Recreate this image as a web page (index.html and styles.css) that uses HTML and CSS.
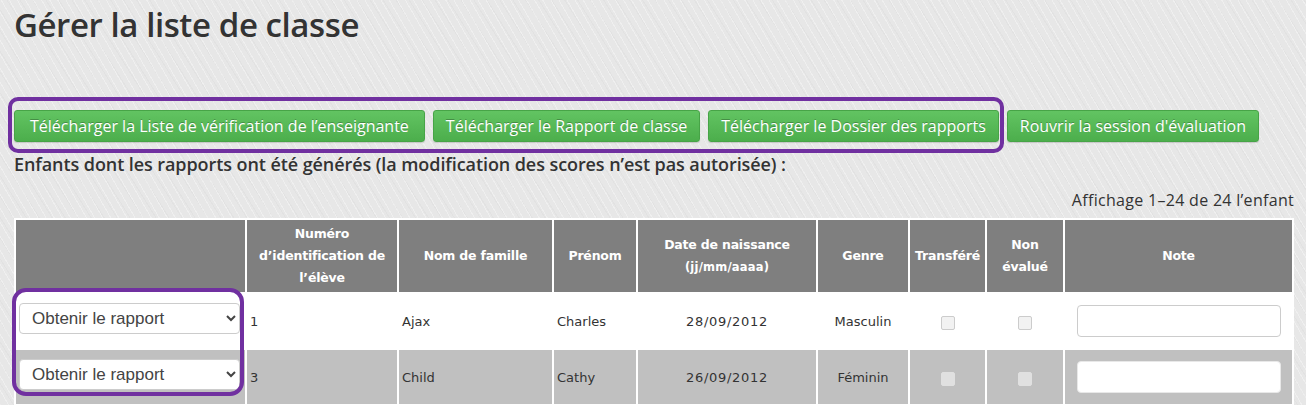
FILE: index.html
```html
<!DOCTYPE html>
<html lang="fr">
<head>
    <meta charset="UTF-8">
    <title>Gérer la liste de classe</title>
    <link rel="stylesheet" href="styles.css">
</head>
<body>
    <h1 class="page-title">Gérer la liste de classe</h1>

    <!-- Actions -->
    <div class="actions">
        <button class="btn-green btn-wide">Télécharger la Liste de vérification de l’enseignante</button>
        <button class="btn-green">Télécharger le Rapport de classe</button>
        <button class="btn-green">Télécharger le Dossier des rapports</button>
        <button class="btn-green">Rouvrir la session d'évaluation</button>
        <div class="highlight highlight-buttons"></div>
    </div>

    <h2 class="section-title">Enfants dont les rapports ont été générés (la modification des scores n’est pas autorisée) :</h2>
    <p class="paging">Affichage 1–24 de 24 l’enfant</p>

    <!-- Class list -->
    <div class="table-wrap">
        <table class="class-list">
            <colgroup>
                <col style="width:231px">
                <col style="width:152px">
                <col style="width:155px">
                <col style="width:84px">
                <col style="width:180px">
                <col style="width:92px">
                <col style="width:77px">
                <col style="width:78px">
                <col>
            </colgroup>
            <thead>
                <tr>
                    <th></th>
                    <th>Numéro d’identification de l’élève</th>
                    <th>Nom de famille</th>
                    <th>Prénom</th>
                    <th>Date de naissance<br><span class="hint">(jj/mm/aaaa)</span></th>
                    <th>Genre</th>
                    <th>Transféré</th>
                    <th>Non évalué</th>
                    <th>Note</th>
                </tr>
            </thead>
            <tbody>
                <tr>
                    <td><select class="report-select"><option>Obtenir le rapport</option></select></td>
                    <td>1</td>
                    <td>Ajax</td>
                    <td>Charles</td>
                    <td class="center date">28/09/2012</td>
                    <td class="center">Masculin</td>
                    <td class="center"><span class="check"></span></td>
                    <td class="center"><span class="check"></span></td>
                    <td><input type="text" class="note-input"></td>
                </tr>
                <tr class="alt">
                    <td><select class="report-select"><option>Obtenir le rapport</option></select></td>
                    <td>3</td>
                    <td>Child</td>
                    <td>Cathy</td>
                    <td class="center date">26/09/2012</td>
                    <td class="center">Féminin</td>
                    <td class="center"><span class="check"></span></td>
                    <td class="center"><span class="check"></span></td>
                    <td><input type="text" class="note-input"></td>
                </tr>
            </tbody>
        </table>
        <div class="highlight highlight-selects"></div>
    </div>
</body>
</html>
```

FILE: styles.css
```css
body {
    margin: 0;
    padding: 0 12px 0 14px;
    font-family: "Open Sans", Arial, sans-serif;
    color: #333;
    background-color: #e7e7e7;
    background-image:
        repeating-linear-gradient(60deg, rgba(255, 255, 255, 0.35) 0px, rgba(255, 255, 255, 0.35) 1px, transparent 1px, transparent 7px),
        repeating-linear-gradient(58deg, rgba(0, 0, 0, 0.025) 0px, rgba(0, 0, 0, 0.025) 1px, transparent 1px, transparent 11px);
    height: 405px;
    overflow: hidden;
}

.page-title {
    margin: 0;
    padding-top: 2px;
    font-size: 33px;
    font-weight: 600;
    letter-spacing: -0.42px;
    line-height: 46px;
    color: #333;
}

.actions {
    position: relative;
    display: flex;
    gap: 8px;
    margin-top: 62px;
}

.btn-green {
    font-family: "Open Sans", Arial, sans-serif;
    font-size: 16px;
    color: #fff;
    text-shadow: 0 -1px 0 rgba(0, 0, 0, 0.25);
    background: linear-gradient(#62c462, #4cae4c);
    border: 1px solid #47a447;
    border-radius: 3px;
    height: 32px;
    padding: 0 12px;
    cursor: pointer;
    box-shadow: 0 1px 1px rgba(0, 0, 0, 0.15);
}

.btn-wide {
    padding: 0 15px 0 15px;
}

.highlight {
    position: absolute;
    border: 4px solid #7030a0;
    pointer-events: none;
}

.highlight-buttons {
    left: -6px;
    top: -13px;
    width: 988px;
    height: 48px;
    border-radius: 10px;
}

.section-title {
    margin: 9px 0 0;
    font-size: 18px;
    font-weight: 600;
    letter-spacing: -0.08px;
    line-height: 26px;
    color: #333;
}

.paging {
    margin: 12px 0 0;
    text-align: right;
    font-size: 16px;
    letter-spacing: 0.3px;
    line-height: 22px;
    color: #333;
}

.table-wrap {
    position: relative;
    margin-top: 7px;
}

.class-list {
    width: 1280px;
    table-layout: fixed;
    border-collapse: collapse;
    font-family: "DejaVu Sans", Verdana, sans-serif;
    font-size: 13px;
    color: #333;
}

.class-list th,
.class-list td {
    border: 2px solid #fff;
}

.class-list th {
    background-color: #7f7f7f;
    color: #fff;
    font-size: 12.5px;
    font-weight: bold;
    line-height: 22px;
    height: 72px;
    padding: 0 4px;
    text-align: center;
    letter-spacing: -0.2px;
}

.hint {
    font-size: 11.5px;
    font-weight: bold;
    letter-spacing: 0.2px;
}

.class-list td {
    background-color: #fff;
    height: 54px;
    padding: 0 3px;
}

.class-list tr.alt td {
    background-color: #c0c0c0;
}

.center {
    text-align: center;
}

.date {
    letter-spacing: 0.7px;
}

.report-select {
    width: 221px;
    height: 31px;
    margin: 0 0 6px;
    padding: 0 8px;
    font-family: "Liberation Sans", Arial, sans-serif;
    font-size: 17px;
    color: #444;
    background: #fff;
    border: 1px solid #ccc;
    border-radius: 4px;
    vertical-align: middle;
}

.check {
    display: inline-block;
    width: 12px;
    height: 12px;
    margin-top: 4px;
    border: 1px solid #ccc;
    border-radius: 2px;
    background: #f2f2f2;
    vertical-align: middle;
}

.alt .check {
    border-color: #e0e0e0;
    background: #e0e0e0;
}

.note-input {
    box-sizing: border-box;
    width: 204px;
    height: 32px;
    margin-left: 9px;
    border: 1px solid #ccc;
    border-radius: 4px;
    background: #fff;
}

.alt .note-input {
    border-color: #e8e8e8;
}

.highlight-selects {
    left: -2px;
    top: 70px;
    width: 224px;
    height: 100px;
    border-radius: 14px;
}
```
